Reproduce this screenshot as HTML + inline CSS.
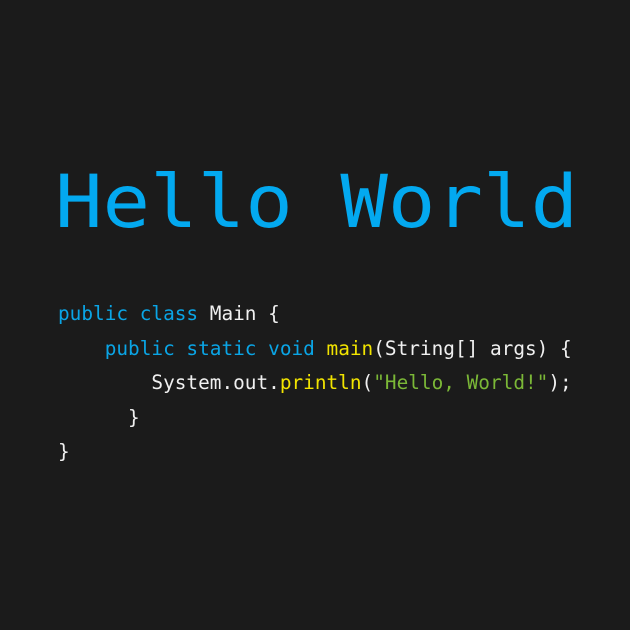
<!DOCTYPE html>
<html><head><style>
html,body{margin:0;padding:0;background:#1b1b1b;width:630px;height:630px;overflow:hidden}
.t{position:absolute;left:55px;top:161px;font:79px/79px "DejaVu Sans Mono","Liberation Mono",monospace;color:#03a9f0;white-space:pre;transform:scaleY(0.92);transform-origin:0 67px}
.c{position:absolute;left:58px;font:19.4px/19.4px "DejaVu Sans Mono","Liberation Mono",monospace;color:#f0f0f0;white-space:pre}
.b{color:#0aa5e6}.y{color:#f2e400}.g{color:#7bb837}
</style></head><body>
<div class="t">Hello World</div>
<div class="c" style="top:304px"><span class="b">public class</span> Main {</div>
<div class="c" style="top:338.5px">    <span class="b">public static void</span> <span class="y">main</span>(String[] args) {</div>
<div class="c" style="top:373px">        System.out.<span class="y">println</span>(<span class="g">"Hello, World!"</span>);</div>
<div class="c" style="top:407.5px">      }</div>
<div class="c" style="top:442px">}</div>
</body></html>
